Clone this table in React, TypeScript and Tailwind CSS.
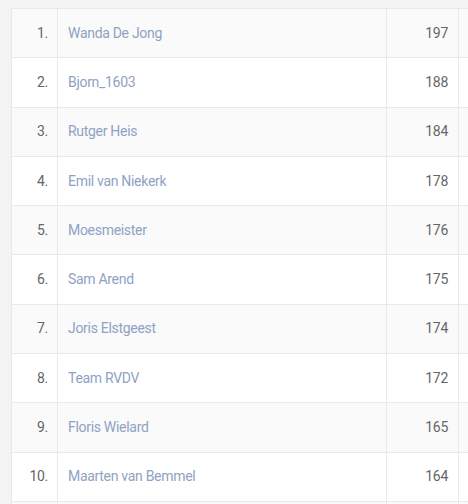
const rows: [string, number][] = [
  ['Wanda De Jong', 197],
  ['Bjorn_1603', 188],
  ['Rutger Heis', 184],
  ['Emil van Niekerk', 178],
  ['Moesmeister', 176],
  ['Sam Arend', 175],
  ['Joris Elstgeest', 174],
  ['Team RVDV', 172],
  ['Floris Wielard', 165],
  ['Maarten van Bemmel', 164],
  ['', 0],
];

export default function App() {
  return (
    <div
      className="h-[504px] w-[468px] overflow-hidden bg-[#f3f3f3] pl-[11px] pt-2"
      style={{ fontFamily: 'Roboto, "Liberation Sans", sans-serif' }}
    >
      <table className="w-[520px] table-fixed border-collapse text-[14px] tracking-[-0.3px]">
        <colgroup>
          <col className="w-[46px]" />
          <col className="w-[329px]" />
          <col className="w-[72px]" />
          <col />
        </colgroup>
        <tbody>
          {rows.map(([name, score], i) => (
            <tr
              key={i}
              className={`h-[49.3px] ${i % 2 === 0 ? 'bg-[#fafafa]' : 'bg-white'}`}
            >
              <td className="border border-[#e9e9e9] pr-[9px] text-right text-[#666]">
                {name ? `${i + 1}.` : ''}
              </td>
              <td className="border border-[#e9e9e9] pl-[10px] text-[#8fa2c3]">
                {name}
              </td>
              <td className="border border-[#e9e9e9] pr-[10px] text-right text-[#666]">
                {name ? score : ''}
              </td>
              <td className="border border-[#e9e9e9]"></td>
            </tr>
          ))}
        </tbody>
      </table>
    </div>
  );
}
